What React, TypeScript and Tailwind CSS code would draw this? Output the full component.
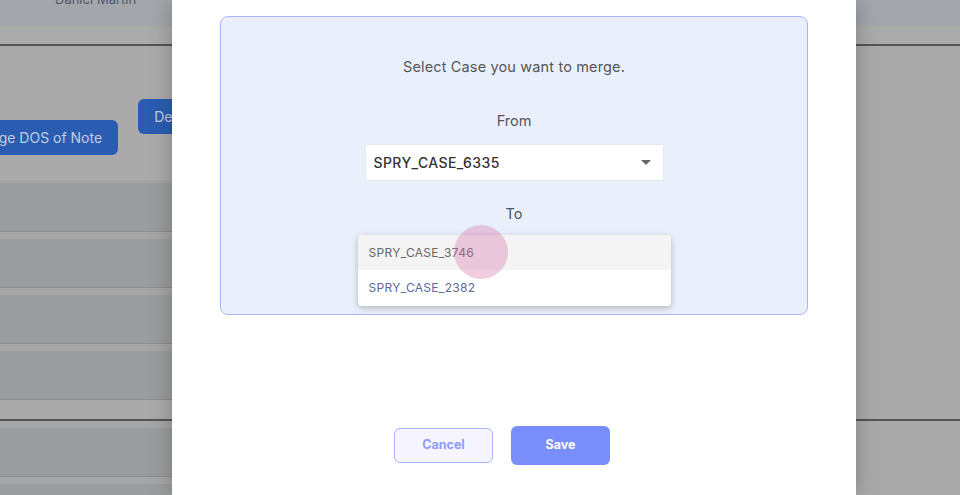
import React from 'react';

function Row() {
    return (
        <>
            <div className="h-[48px] bg-[#9b9c9e]" />
            <div className="h-px bg-[#8c8c8c]" />
            <div className="h-[7px] bg-[#a6a6a6]" />
        </>
    );
}

function Background() {
    return (
        <div className="flex flex-col h-full">
            <div className="h-[26px] bg-[#a3a6ab] shrink-0 overflow-hidden">
                <div className="ml-[55px] -mt-[10px] text-[13px] text-[#4f596c]">Daniel Martin</div>
            </div>
            <div className="h-[18px] bg-[#ababab] shrink-0" />
            <div className="h-[2px] bg-[#555555] shrink-0" />

            <div className="w-[840px] shrink-0">
                <div className="h-[134px] flex items-start overflow-hidden">
                    <button className="ml-[-52px] mt-[74px] h-[35px] px-4 rounded-[6px] bg-[#2a5db1] text-[14px] text-[#c3cde2] whitespace-nowrap">
                        Change DOS of Note
                    </button>
                    <button className="ml-[20px] mt-[53px] h-[35px] px-4 rounded-[6px] bg-[#2a5db1] text-[14px] text-[#c3cde2] whitespace-nowrap">
                        Delete Note
                    </button>
                </div>
                <div className="h-[3px] bg-[#a6a6a6]" />
                <Row />
                <Row />
                <Row />
                <div className="h-[48px] bg-[#9b9c9e]" />
                <div className="h-px bg-[#8c8c8c]" />
                <div className="h-[19px] bg-[#aaaaaa]" />
            </div>

            <div className="h-[2px] bg-[#555555] shrink-0" />

            <div className="w-[840px] shrink-0">
                <div className="h-[7px] bg-[#a6a6a6]" />
                <Row />
                <Row />
            </div>
        </div>
    );
}

function MergeModal() {
    return (
        <div className="absolute left-[172px] top-0 w-[684px] h-full bg-white shadow-[0_0_22px_rgba(0,0,0,0.25)] flex flex-col">
            <div className="mt-[16px] ml-[48px] w-[588px] h-[299px] rounded-[8px] border border-[#aab4f8] bg-[#eaf0fb] flex flex-col items-center">
                <div className="mt-[40px] text-[14.5px] tracking-[0.15px] leading-[20px] text-[#555555]">
                    Select Case you want to merge.
                </div>
                <div className="mt-[34px] text-[14.5px] leading-[20px] text-[#555555]">From</div>
                <div className="mt-[13px] w-[299px] h-[37px] bg-white border border-[#e6e9ef] flex items-center justify-between pl-[8px] pr-[12px]">
                    <span className="text-[14px] font-medium text-[#333333] tracking-[0.4px]">SPRY_CASE_6335</span>
                    <svg width="10" height="5" viewBox="0 0 10 5">
                        <path d="M0 0 L10 0 L5 5 Z" fill="#666666" />
                    </svg>
                </div>
                <div className="mt-[23px] text-[14.5px] leading-[20px] text-[#555555]">To</div>
                <div className="relative mt-[11px] w-[313px]">
                    <div className="bg-white rounded-[4px] shadow-[0_2px_6px_rgba(0,0,0,0.25)] overflow-hidden">
                        <div className="h-[35px] bg-[#f4f4f4] flex items-center pl-[11px] text-[12px] tracking-[0.3px] text-[#666666]">
                            SPRY_CASE_3746
                        </div>
                        <div className="h-[36px] flex items-center pl-[11px] text-[12px] tracking-[0.3px] text-[#5b6a9a]">
                            SPRY_CASE_2382
                        </div>
                    </div>
                    <div className="absolute left-[96px] top-[-10px] w-[54px] h-[54px] rounded-full bg-[rgba(216,111,168,0.35)]" />
                </div>
            </div>

            <div className="mt-[111px] ml-[222px] flex items-center gap-[18px]">
                <button className="w-[99px] h-[35px] rounded-[6px] border border-[#a8b4fb] bg-[#f6f4ff] text-[12.5px] font-bold text-[#8e9cf6]">
                    Cancel
                </button>
                <button className="w-[99px] h-[39px] rounded-[6px] bg-[#7a8efb] text-[12.5px] font-bold text-white">
                    Save
                </button>
            </div>
        </div>
    );
}

export default function App() {
    return (
        <div className="relative w-[960px] h-[495px] overflow-hidden bg-[#aaaaaa] font-['Inter',sans-serif]">
            <Background />
            <MergeModal />
        </div>
    );
}
